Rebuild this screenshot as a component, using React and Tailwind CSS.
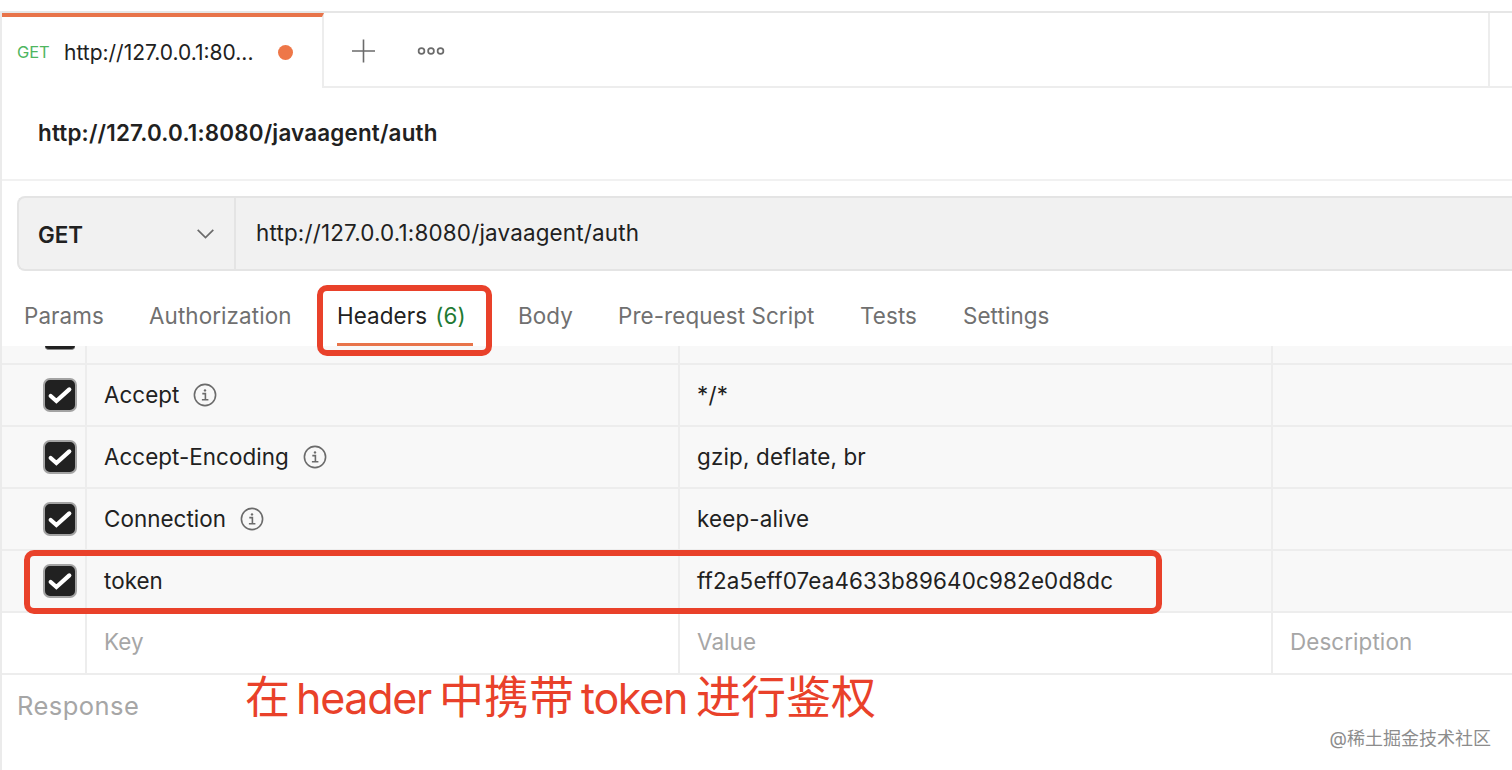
import React from 'react';
import clsx from 'clsx';

const requestTabs = [
  { label: 'Params', width: 'w-[80px]' },
  { label: 'Authorization', width: 'w-[143px]' },
  { label: 'Headers', count: 6, width: 'w-[136px]', active: true },
  { label: 'Body', width: 'w-[55px]' },
  { label: 'Pre-request Script', width: 'w-[197px]' },
  { label: 'Tests', width: 'w-[58px]' },
  { label: 'Settings', width: 'w-[88px]' },
];

const headers = [
  { name: 'Accept', value: '*/*', info: true },
  { name: 'Accept-Encoding', value: 'gzip, deflate, br', info: true },
  { name: 'Connection', value: 'keep-alive', info: true },
  { name: 'token', value: 'ff2a5eff07ea4633b89640c982e0d8dc', highlighted: true },
];

const Checkbox = () => (
  <span className="flex h-[34px] w-[34px] items-center justify-center rounded-[7px] border-2 border-[#a3a3a3] bg-[#212121]">
    <svg className="h-[30px] w-[30px] shrink-0" viewBox="0 0 30 30" fill="none">
      <path d="M5.7 16 L11.4 21 L24.3 9.4" stroke="white" strokeWidth="4.2" strokeLinecap="round" strokeLinejoin="miter" />
    </svg>
  </span>
);

const InfoIcon = () => (
  <svg className="h-6 w-6" viewBox="0 0 24 24" fill="none" stroke="#6b6b6b">
    <circle cx="12" cy="12" r="10.6" strokeWidth="1.6" />
    <path d="M9.3 10.6 H12.4 V16.8 M8.9 16.8 H15.4" strokeWidth="1.6" />
    <circle cx="12" cy="7.4" r="1.2" fill="#6b6b6b" stroke="none" />
  </svg>
);

const TabBar = () => (
  <div className="flex h-[77px] border-t-2 border-[#e6e6e6]">
    <div className="flex w-[322px] items-center border-t-4 border-r-2 border-t-[#e8744a] border-r-[#ededed] pl-[15px]">
      <span className="w-[47px] text-[16.5px] tracking-[-0.1px] text-[#4fb65f]">GET</span>
      <span className="w-[214px] text-[21px] text-[#212121]">http://127.0.0.1:80...</span>
      <span className="h-[15px] w-[15px] rounded-full bg-[#ee7748]" />
    </div>
    <div className="flex flex-1 items-center border-b-2 border-[#ededed] pt-0.5 pl-[27px]">
      <svg className="h-6 w-6" viewBox="0 0 24 24" stroke="#6b6b6b" strokeWidth="1.6">
        <path d="M12.5 0.5 V23.5 M1 12 H24" />
      </svg>
      <svg className="ml-[42px] h-3 w-7" viewBox="0 0 28 12" fill="none" stroke="#6b6b6b" strokeWidth="1.7">
        <circle cx="4.5" cy="6" r="2.9" />
        <circle cx="14" cy="6" r="2.9" />
        <circle cx="23.5" cy="6" r="2.9" />
      </svg>
    </div>
    <div className="w-6 border-b-2 border-l-2 border-[#ededed]" />
  </div>
);

const UrlBar = () => (
  <div className="mt-[15px] ml-[15px] flex h-[75px] rounded-l-lg border-2 border-r-0 border-[#e4e4e4] bg-[#f1f1f1]">
    <div className="flex w-[217px] items-center justify-between border-r-2 border-[#e4e4e4] pr-5 pl-[19px]">
      <span className="pt-[3px] text-[22.4px] font-semibold text-[#212121]">GET</span>
      <svg className="h-[10px] w-[17px]" viewBox="0 0 17 10" fill="none" stroke="#6b6b6b" strokeWidth="1.7">
        <path d="M0.7 0.8 L8.5 8.5 L16.3 0.8" />
      </svg>
    </div>
    <span className="self-center pb-0.5 pl-5 text-[22.4px] tracking-[0.19px] text-[#212121]">
      http://127.0.0.1:8080/javaagent/auth
    </span>
  </div>
);

const RequestTabs = () => (
  <nav className="flex h-[75px] gap-[45px] pl-[22px] text-[22.4px] tracking-[0.1px] whitespace-nowrap text-[#707070]">
    {requestTabs.map((tab) => (
      <div
        key={tab.label}
        className={clsx('relative flex h-full items-center pt-[14px]', tab.width, tab.active && 'text-[#212121]')}
      >
        <span>{tab.label}</span>
        {tab.count && <span className="ml-2 text-[#1f7a33]">({tab.count})</span>}
        {tab.active && (
          <>
            <span className="absolute bottom-0 left-0 h-[3px] w-full bg-[#e8744a]" />
            {/* callout frame */}
            <span className="absolute top-[14px] -left-[20px] z-10 h-[71px] w-[175px] rounded-[10px] border-6 border-[#e9412a]" />
          </>
        )}
      </div>
    ))}
  </nav>
);

const HeaderRow = ({ row }) => (
  <div className="relative grid h-[62px] grid-cols-[85px_593px_593px_1fr] border-b-2 border-[#ededed] bg-[#f8f8f8]">
    <div className="flex items-center border-r-2 border-[#ededed] pl-[41px]">
      <Checkbox />
    </div>
    <div className="flex items-center gap-[14px] border-r-2 border-[#ededed] pl-[17px] tracking-[0.05px]">
      <span>{row.name}</span>
      {row.info && <InfoIcon />}
    </div>
    <div className="flex items-center border-r-2 border-[#ededed] pl-[17px]">{row.value}</div>
    <div />
    {row.highlighted && (
      <div className="absolute -top-px left-[22px] z-10 h-[64px] w-[1138px] rounded-[10px] border-6 border-[#e9412a]" />
    )}
  </div>
);

const HeadersTable = () => (
  <div className="text-[22.4px] tracking-[0.17px] text-[#212121]">
    {/* bottom edge of the row scrolled under the tabs */}
    <div className="grid h-[19px] grid-cols-[85px_593px_593px_1fr] border-b-2 border-[#ededed] bg-[#f8f8f8]">
      <div className="flex items-start border-r-2 border-[#ededed] pl-[41px]">
        <span className="ml-[2px] h-1 w-[30px] rounded-b-md border-b border-[#8a8a8a] bg-[#212121]" />
      </div>
      <div className="border-r-2 border-[#ededed]" />
      <div className="border-r-2 border-[#ededed]" />
    </div>
    {headers.map((row) => (
      <HeaderRow key={row.name} row={row} />
    ))}
    <div className="grid h-[62px] grid-cols-[85px_593px_593px_1fr] border-b-2 border-[#ededed] tracking-[0.1px] text-[#a6a6a6]">
      <div className="border-r-2 border-[#ededed]" />
      <div className="flex items-center border-r-2 border-[#ededed] pb-[3px] pl-[17px]">Key</div>
      <div className="flex items-center border-r-2 border-[#ededed] pb-[3px] pl-[17px]">Value</div>
      <div className="flex items-center pb-[3px] pl-[17px]">Description</div>
    </div>
  </div>
);

export default function App() {
  return (
    <div className="h-[770px] w-[1512px] overflow-hidden bg-white pt-[11px] font-['Inter','Noto_Sans_CJK_SC',sans-serif]">
      <div className="h-full border-l-2 border-[#ebebeb]">
        <TabBar />
        <div className="flex h-[93px] items-center border-b-2 border-[#f1f1f1] pb-0.5 pl-9">
          <h1 className="text-[22.4px] font-semibold tracking-[0.19px] text-[#212121]">
            http://127.0.0.1:8080/javaagent/auth
          </h1>
        </div>
        <UrlBar />
        <RequestTabs />
        <HeadersTable />
        <div className="relative flex h-[95px] items-start justify-between">
          <span className="pt-[12px] pl-[15px] text-[25.5px] tracking-[0.45px] text-[#a6a6a6]">Response</span>
          <span className="absolute top-[-9px] left-[243px] flex items-center text-[45px] leading-[64px] whitespace-nowrap text-[#e9412a]">
            <span>在</span>
            <span className="w-[149px] pl-[6px] text-[43px] tracking-[-1.3px]">header</span>
            <span>中携带</span>
            <span className="w-[122px] pl-[7px] text-[43px] tracking-[-1.3px]">token</span>
            <span>进行鉴权</span>
          </span>
          <span className="mt-[50px] mr-[21px] text-[18px] text-[#8c8c8c]">@稀土掘金技术社区</span>
        </div>
      </div>
    </div>
  );
}
